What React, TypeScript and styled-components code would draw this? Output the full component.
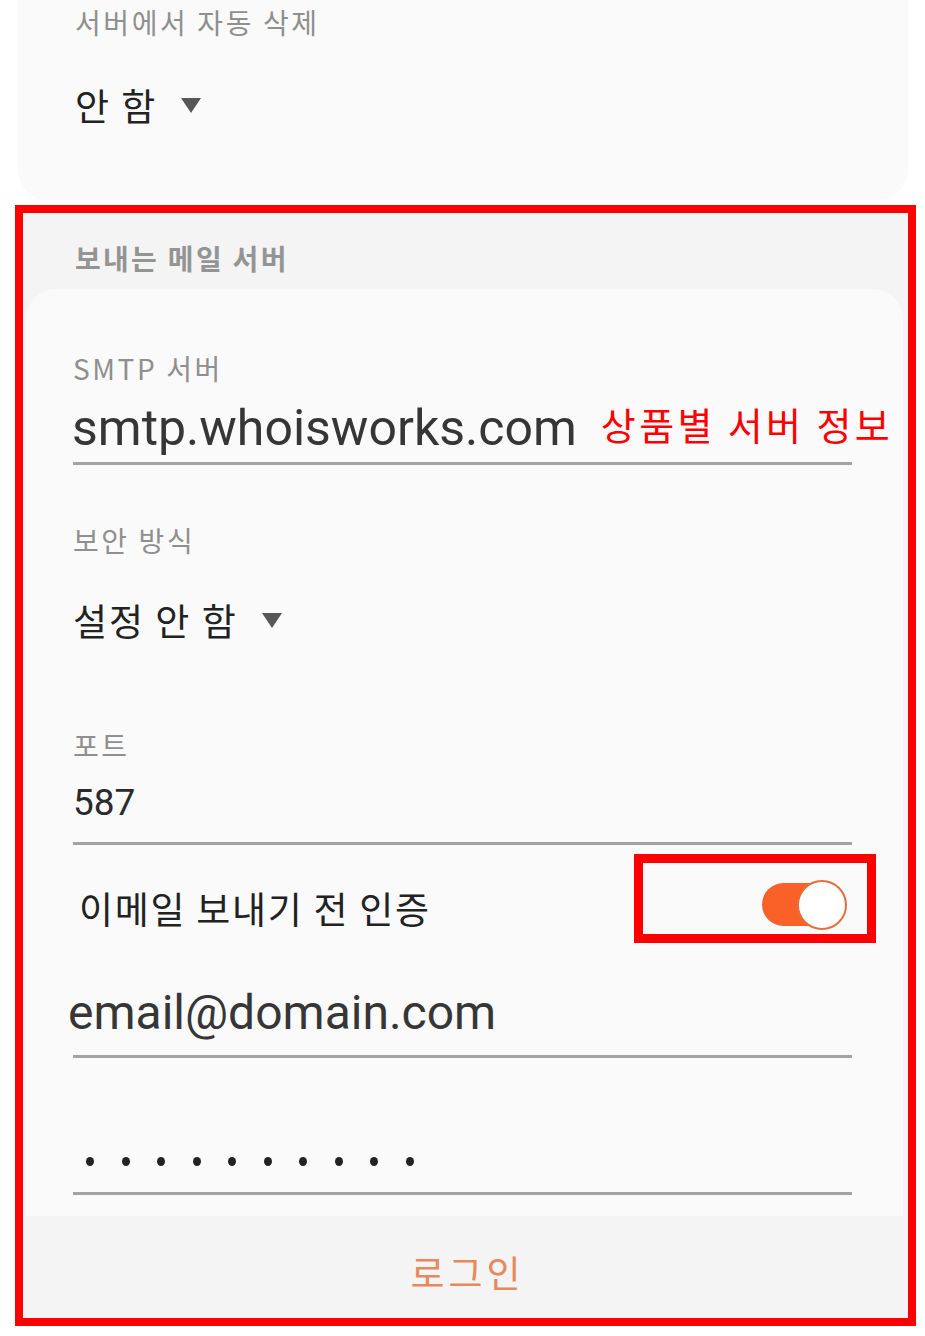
import { createGlobalStyle, styled } from "styled-components";

const GlobalStyle = createGlobalStyle`
  html, body {
    margin: 0;
    padding: 0;
    background: #ffffff;
  }
  body {
    font-family: "Noto Sans CJK KR", "Noto Sans", sans-serif;
  }
  * {
    box-sizing: border-box;
  }
`;

const Screen = styled.div`
  width: 925px;
  padding-bottom: 10px;
`;

const TopCard = styled.section`
  margin: 0 17px 0 18px;
  padding: 2px 0 67px 57px;
  background: #fafafa;
  border-radius: 0 0 30px 30px;
`;

const Highlight = styled.section`
  margin: 5px 9px 0 15px;
  border: 8px solid #ff0000;
  background: #f4f4f4;
`;

const SectionHeader = styled.h2`
  margin: 0;
  padding: 25px 0 11px 52px;
  font-size: 28px;
  line-height: 40px;
  font-weight: 700;
  letter-spacing: 2.3px;
  color: #949494;
`;

const FormCard = styled.div`
  margin: 0 5px 0 3px;
  padding: 59px 51px 21px 47px;
  background: #fafafa;
  border-radius: 30px 30px 0 0;
`;

const FieldLabel = styled.div<{ $gap?: number }>`
  margin-top: ${(p) => p.$gap ?? 0}px;
  font-size: 28px;
  line-height: 40px;
  letter-spacing: 2.6px;
  color: #8f8f8f;
  white-space: nowrap;
`;

const TextValue = styled.div<{ $gap: number; $size: number; $shift?: number }>`
  display: flex;
  align-items: center;
  margin-top: ${(p) => p.$gap}px;
  margin-left: ${(p) => p.$shift ?? 0}px;
  font-family: Roboto, "Noto Sans CJK KR", sans-serif;
  font-size: ${(p) => p.$size}px;
  line-height: 56px;
  color: #363636;
  white-space: nowrap;
`;

const Note = styled.span`
  margin: -8px 0 0 24px;
  font-family: "Noto Sans CJK KR", sans-serif;
  font-size: 38px;
  letter-spacing: 3.4px;
  color: #ff0000;
`;

const PortValue = styled.div`
  margin-top: 13px;
  font-family: Roboto, sans-serif;
  font-size: 37px;
  line-height: 50px;
  color: #2a2a2a;
`;

const Underline = styled.div<{ $gap: number }>`
  margin-top: ${(p) => p.$gap}px;
  height: 3px;
  background: #a3a3a3;
`;

const Select = styled.div<{ $gap: number }>`
  display: flex;
  align-items: center;
  gap: 24px;
  margin-top: ${(p) => p.$gap}px;
  font-size: 37px;
  line-height: 56px;
  letter-spacing: 2px;
  color: #222222;
  white-space: nowrap;
`;

const ToggleRow = styled.div`
  display: flex;
  align-items: center;
  justify-content: space-between;
  height: 89px;
  margin: 9px -24px 0 6px;
`;

const ToggleLabel = styled.span`
  padding-top: 19px;
  font-size: 37px;
  letter-spacing: 1.7px;
  color: #222222;
`;

const MarkBox = styled.div`
  display: flex;
  align-items: center;
  justify-content: flex-end;
  width: 242px;
  height: 89px;
  padding: 12px 20px 0 0;
  border: 9px solid #ff0000;
`;

const Toggle = styled.div`
  position: relative;
  display: flex;
  align-items: center;
  width: 85px;
  height: 50px;
`;

const Track = styled.div`
  width: 70px;
  height: 43px;
  border-radius: 22px;
  background: #fa6128;
`;

const Knob = styled.div`
  position: absolute;
  top: 0;
  right: 0;
  width: 50px;
  height: 50px;
  border-radius: 50%;
  background: #ffffff;
  border: 2px solid #e3703c;
`;

const Dots = styled.div`
  display: flex;
  align-items: center;
  gap: 27.5px;
  height: 30px;
  margin-top: 88px;
  padding-left: 13px;
`;

const Dot = styled.span`
  width: 8px;
  height: 9px;
  border-radius: 50%;
  background: #222222;
`;

const Footer = styled.div`
  height: 102px;
  padding: 10px 0 0 4px;
  text-align: center;
  font-size: 37px;
  line-height: 92px;
  letter-spacing: 4px;
  color: #e8895c;
`;

function Caret() {
  return (
    <svg width="20" height="15" viewBox="0 0 20 15">
      <polygon points="0,0 20,0 10,15" fill="#575757" />
    </svg>
  );
}

export default function App() {
  return (
    <Screen>
      <GlobalStyle />
      <TopCard>
        <FieldLabel>서버에서 자동 삭제</FieldLabel>
        <Select $gap={35}>
          <span>안 함</span>
          <Caret />
        </Select>
      </TopCard>

      <Highlight>
        <SectionHeader>보내는 메일 서버</SectionHeader>
        <FormCard>
          <FieldLabel>SMTP 서버</FieldLabel>
          <TextValue $gap={12} $size={50} $shift={-1}>
            smtp.whoisworks.com
            <Note>상품별 서버 정보</Note>
          </TextValue>
          <Underline $gap={6} />

          <FieldLabel $gap={55}>보안 방식</FieldLabel>
          <Select $gap={32}>
            <span>설정 안 함</span>
            <Caret />
          </Select>

          <FieldLabel $gap={77}>포트</FieldLabel>
          <PortValue>587</PortValue>
          <Underline $gap={14} />

          <ToggleRow>
            <ToggleLabel>이메일 보내기 전 인증</ToggleLabel>
            <MarkBox>
              <Toggle>
                <Track />
                <Knob />
              </Toggle>
            </MarkBox>
          </ToggleRow>

          <TextValue $gap={42} $size={48} $shift={-5}>
            email@domain.com
          </TextValue>
          <Underline $gap={14} />

          <Dots>
            {Array.from({ length: 10 }, (_, i) => (
              <Dot key={i} />
            ))}
          </Dots>
          <Underline $gap={16} />
        </FormCard>
        <Footer>로그인</Footer>
      </Highlight>
    </Screen>
  );
}
